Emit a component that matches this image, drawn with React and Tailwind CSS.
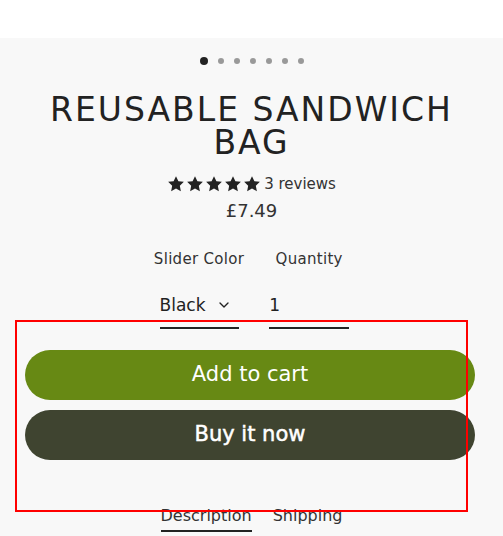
import { ChevronDown } from "lucide-react";

const Star = () => (
  <svg viewBox="0 0 24 24" className="w-[18px] h-[18px]" fill="#222">
    <path d="M12 1.5l3.2 6.7 7.3.9-5.4 5.1 1.4 7.3L12 18l-6.5 3.5 1.4-7.3-5.4-5.1 7.3-.9z" />
  </svg>
);

const App = () => {
  const dots = [0, 1, 2, 3, 4, 5, 6];

  return (
    <div className="relative min-h-screen bg-[#f8f8f8] text-[#222] overflow-hidden" style={{ fontFamily: '"DejaVu Sans", sans-serif' }}>
      {/* image strip */}
      <div className="h-[38px] bg-white"></div>

      {/* slider dots */}
      <div className="flex items-center justify-center gap-[10px] mt-[19px] h-[8px]">
        {dots.map((d) => (
          <span
            key={d}
            className={d === 0 ? "w-[8px] h-[8px] rounded-full bg-[#222]" : "w-[6px] h-[6px] rounded-full bg-[#999]"}
          ></span>
        ))}
      </div>

      {/* product info */}
      <div className="flex flex-col items-center text-center">
        <h1 className="mt-[28px] text-[33px] leading-[33px] tracking-[2px] font-normal">
          REUSABLE SANDWICH
          <br />
          BAG
        </h1>
        <div className="flex items-center mt-[15px] h-[20px]">
          <div className="flex gap-[1px]">
            <Star /><Star /><Star /><Star /><Star />
          </div>
          <span className="ml-[3px] text-[15px] text-[#333]">3 reviews</span>
        </div>
        <p className="mt-[6px] text-[18px] leading-[22px] text-[#333]">£7.49</p>

        {/* variants */}
        <div className="flex gap-[25px] mt-[27px]">
          <div className="flex flex-col items-center">
            <span className="text-[15px] leading-[20px] tracking-[0.3px] text-[#333]">Slider Color</span>
            <div className="mt-[25px] w-[79px] border-b-2 border-[#222] pb-[11px] flex items-center text-[17px] leading-[22px]">
              Black
              <ChevronDown className="w-4 h-4 ml-[10px]" strokeWidth={2} />
            </div>
          </div>
          <div className="flex flex-col items-center">
            <span className="text-[15px] leading-[20px] tracking-[0.3px] text-[#333]">Quantity</span>
            <div className="mt-[25px] w-[80px] border-b-2 border-[#222] pb-[11px] text-[17px] leading-[22px] text-left">
              1
            </div>
          </div>
        </div>
      </div>

      {/* buttons */}
      <div className="flex flex-col gap-[10px] pl-[25px] pr-[28px] mt-[21px]">
        <button className="h-[50px] rounded-full bg-[#678914] text-white text-[21px]">Add to cart</button>
        <button className="h-[50px] rounded-full bg-[#3f4430] text-white text-[21px] [-webkit-text-stroke:0.5px_white]">Buy it now</button>
      </div>

      {/* tabs */}
      <div className="flex justify-center gap-[21px] mt-[46px] text-[16px] leading-[20px] text-[#333]">
        <span className="border-b-2 border-[#222] pb-[4px]">Description</span>
        <span className="pb-[4px]">Shipping</span>
      </div>

      {/* annotation box */}
      <div className="absolute left-[15px] top-[320px] w-[453px] h-[192px] border-2 border-[#ff0000]"></div>
    </div>
  );
};

export default App;
